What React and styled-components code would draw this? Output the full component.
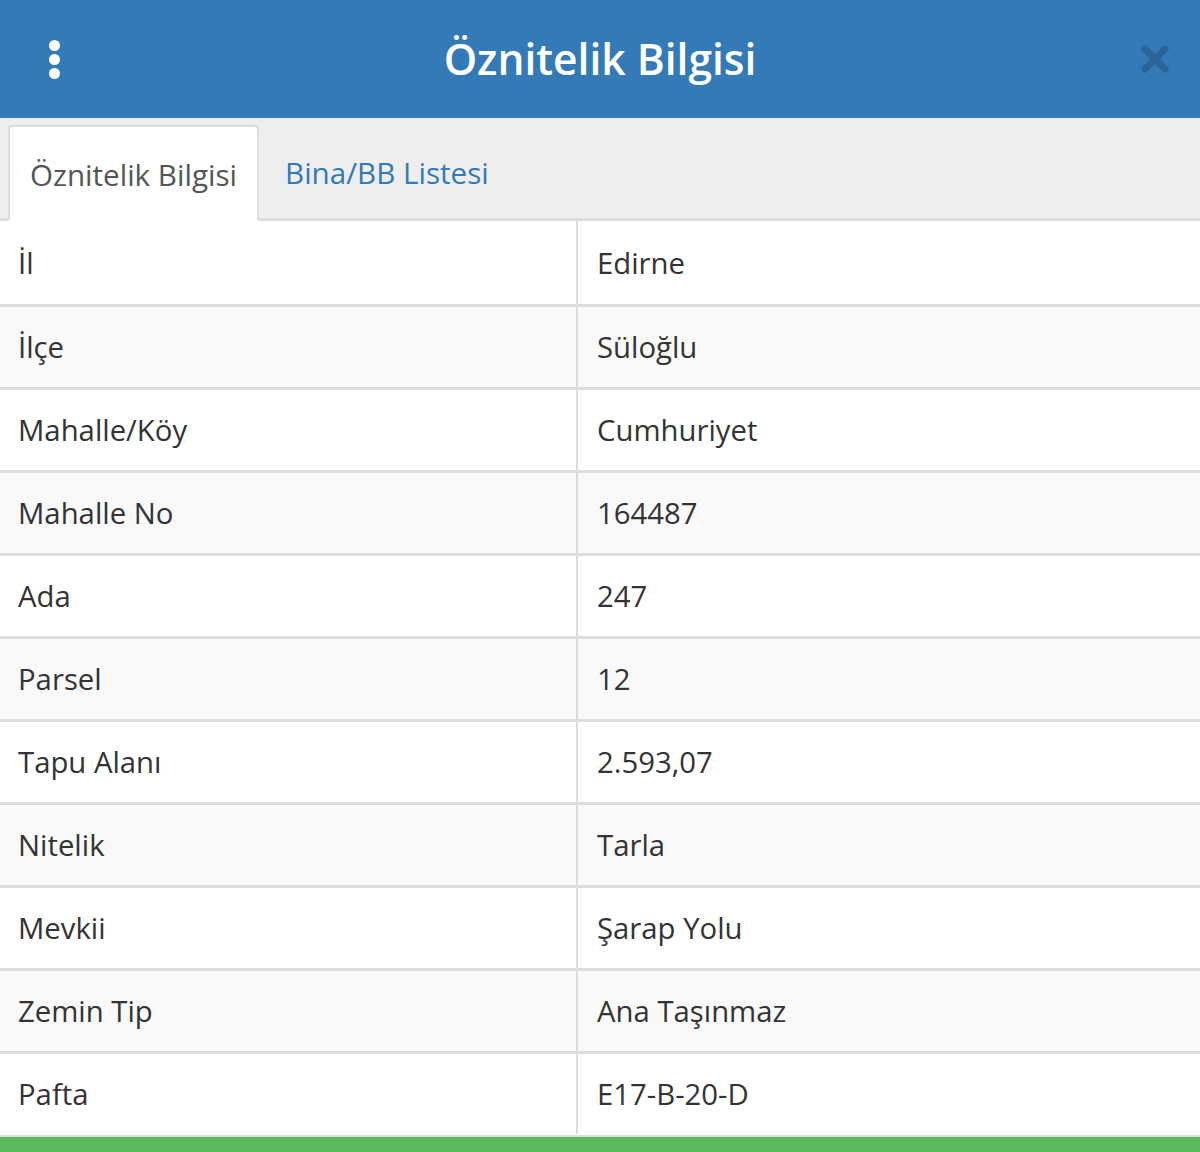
import React from "react";
import styled, { createGlobalStyle } from "styled-components";

const Global = createGlobalStyle`
  html, body { margin: 0; padding: 0; background: #fff; }
  body { font-family: "Open Sans", "Noto Sans", sans-serif; color: #333; }
  * { box-sizing: border-box; }
`;

const Panel = styled.div`
  width: 1200px;
  height: 1152px;
  display: flex;
  flex-direction: column;
  overflow: hidden;
  background: #fff;
`;

const Header = styled.div`
  height: 118px;
  background: #337ab7;
  display: grid;
  grid-template-columns: 110px 1fr 110px;
  align-items: center;
  flex-shrink: 0;
`;

const MenuButton = styled.div`
  display: flex;
  flex-direction: column;
  align-items: center;
  justify-content: center;
  gap: 3px;
  width: 22px;
  margin-left: 43px;
`;

const Dot = styled.span`
  width: 11px;
  height: 11px;
  border-radius: 50%;
  background: #fff;
`;

const Title = styled.h1`
  margin: 0;
  text-align: center;
  color: #fff;
  font-size: 42.5px;
  font-weight: 600;
  letter-spacing: 0;
  line-height: 1;
`;

const Close = styled.div`
  display: flex;
  justify-content: flex-end;
  padding-right: 30px;
`;

const TabBar = styled.div`
  height: 103px;
  background: #eeeeee;
  border-bottom: 3px solid #dddddd;
  display: flex;
  align-items: flex-end;
  padding-left: 8px;
  flex-shrink: 0;
`;

const Tab = styled.div`
  height: ${(p) => (p.$active ? "96px" : "93px")};
  margin-bottom: ${(p) => (p.$active ? "-3px" : "0")};
  margin-right: 4px;
  padding: 0 20px;
  display: flex;
  align-items: center;
  font-size: 29.6px;
  color: ${(p) => (p.$active ? "#555" : "#337ab7")};
  background: ${(p) => (p.$active ? "#fff" : "transparent")};
  border: 2px solid ${(p) => (p.$active ? "#dddddd" : "transparent")};
  border-bottom-color: transparent;
  border-radius: 4px 4px 0 0;
  padding-top: 2px;
`;

const Table = styled.div`
  display: flex;
  flex-direction: column;
  flex: 1;
`;

const Row = styled.div`
  display: grid;
  grid-template-columns: 576px 1fr;
  height: 83px;
  background: ${(p) => (p.$alt ? "#f9f9f9" : "#fff")};
  border-top: ${(p) => (p.$first ? "0" : "3px solid #dddddd")};
  flex-shrink: 0;
`;

const Cell = styled.div`
  display: flex;
  align-items: center;
  padding-left: ${(p) => (p.$value ? "19px" : "18px")};
  font-size: 29.3px;
  color: #333;
  border-left: ${(p) => (p.$value ? "2px solid #dddddd" : "0")};
`;

const Footer = styled.div`
  height: 17px;
  background: #5cb85c;
  border-top: 2px solid #dddddd;
  flex-shrink: 0;
`;

const rows = [
  ["İl", "Edirne"],
  ["İlçe", "Süloğlu"],
  ["Mahalle/Köy", "Cumhuriyet"],
  ["Mahalle No", "164487"],
  ["Ada", "247"],
  ["Parsel", "12"],
  ["Tapu Alanı", "2.593,07"],
  ["Nitelik", "Tarla"],
  ["Mevkii", "Şarap Yolu"],
  ["Zemin Tip", "Ana Taşınmaz"],
  ["Pafta", "E17-B-20-D"],
];

export default function App() {
  return (
    <>
      <Global />
      <Panel>
        <Header>
          <MenuButton>
            <Dot />
            <Dot />
            <Dot />
          </MenuButton>
          <Title>Öznitelik Bilgisi</Title>
          <Close>
            <svg width="30" height="32" viewBox="0 0 30 32">
              <path
                d="M5 6 L25 26 M25 6 L5 26"
                stroke="#2a6599"
                strokeWidth="7"
                strokeLinecap="round"
              />
            </svg>
          </Close>
        </Header>
        <TabBar>
          <Tab $active>Öznitelik Bilgisi</Tab>
          <Tab>Bina/BB Listesi</Tab>
        </TabBar>
        <Table>
          {rows.map(([k, v], i) => (
            <Row key={k} $alt={i % 2 === 1} $first={i === 0}>
              <Cell>{k}</Cell>
              <Cell $value>{v}</Cell>
            </Row>
          ))}
        </Table>
        <Footer />
      </Panel>
    </>
  );
}
